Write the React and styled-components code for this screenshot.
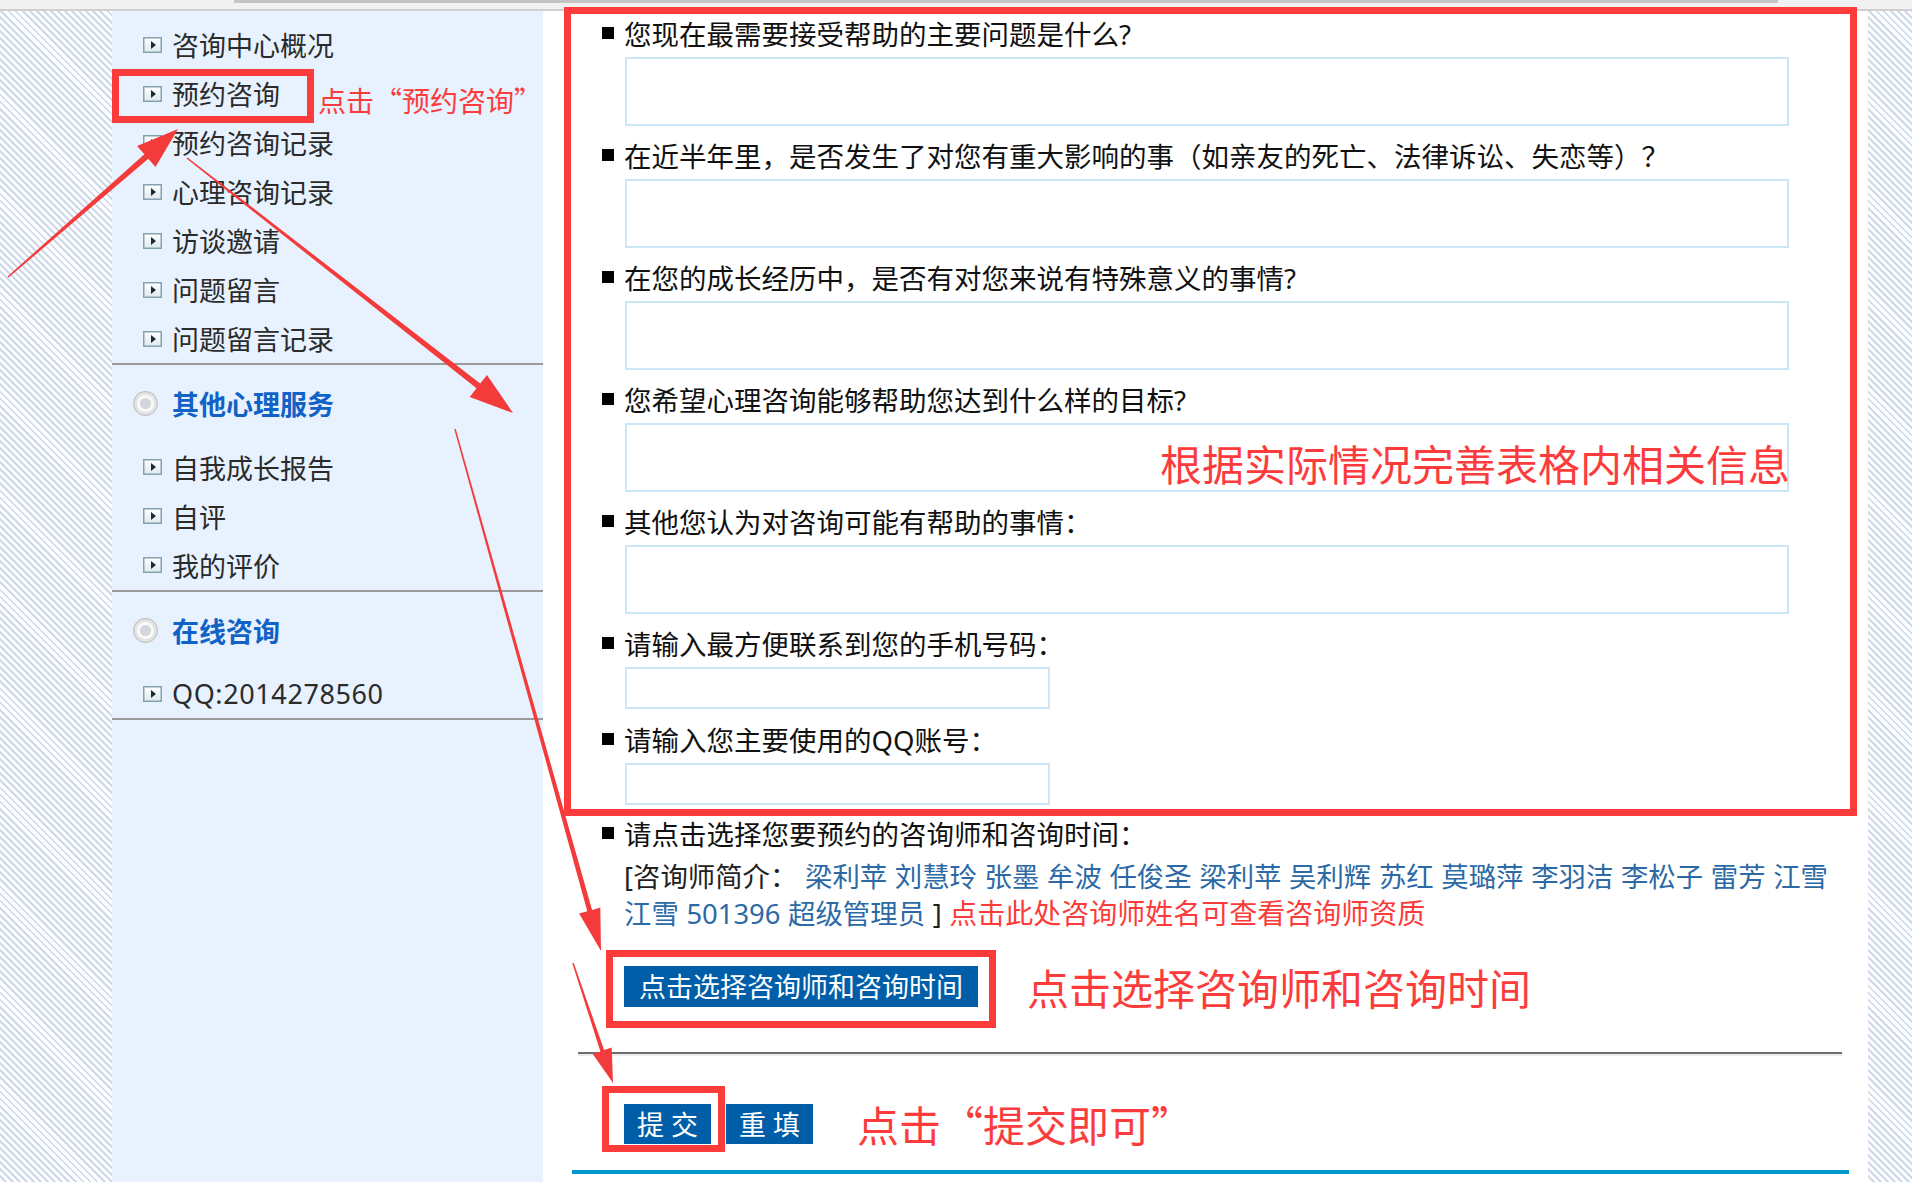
import React from "react"
import styled, { createGlobalStyle } from "styled-components"

const GlobalStyle = createGlobalStyle`
  html, body {
    margin: 0;
    padding: 0;
  }
  body {
    font-family: "Noto Sans", "Noto Sans CJK SC", sans-serif;
    background: #fff;
  }
`

const Page = styled.div`
  position: relative;
  width: 1912px;
  height: 1182px;
  overflow: hidden;
  display: flex;
  flex-direction: column;
`
const TopBar = styled.div`
  flex-shrink: 0;
  height: 9px;
  background: #f1f1f1;
  border-bottom: 2px solid #d0d0d0;
`
const ScrollThumb = styled.div`
  margin-left: 234px;
  width: 1544px;
  height: 3px;
  background: #c4c4c4;
`
const Body = styled.div`
  flex: 1;
  display: flex;
`
/* hatched page background left and right of the content */
const Stripes = styled.div`
  flex-shrink: 0;
  width: ${props => props.$w}px;
  background: repeating-linear-gradient(
    45deg,
    #fcfdff 0 3px,
    #cfd9e8 3px 5px
  );
`

const Sidebar = styled.aside`
  flex-shrink: 0;
  width: 431px;
  box-sizing: border-box;
  padding-top: 9px;
  background: #e7f2fe;
`
const MenuItem = styled.a`
  position: relative;
  display: flex;
  align-items: center;
  gap: 10px;
  height: 49px;
  padding-left: 31px;
  font-size: 27px;
  color: #2b2b2b;
  text-decoration: none;
  white-space: nowrap;
  letter-spacing: ${props => (props.$wide ? "0.6px" : "0")};
`
const SectionHead = styled.div`
  display: flex;
  align-items: center;
  gap: 14px;
  height: 49px;
  margin: 14px 0 14.5px;
  padding-left: 21px;
  font-size: 27px;
  font-weight: bold;
  color: #1162c6;
`
const Rule = styled.div`
  height: 2px;
  background: #9a9a9a;
`

const Main = styled.main`
  position: relative;
  flex-shrink: 0;
  width: 1325px;
  box-sizing: border-box;
  padding: 2px 19px 0 29px;
  background: #fff;
`
const Form = styled.form`
  margin: 0;
  padding-left: 30px;
`
const Question = styled.div`
  position: relative;
  margin-bottom: ${props => props.$after}px;
`
const Label = styled.div`
  display: flex;
  align-items: center;
  gap: 10px;
  height: 40px;
  font-size: 27.5px;
  color: #111;
  white-space: nowrap;

  &::before {
    content: "";
    flex-shrink: 0;
    width: 12px;
    height: 12px;
    background: #000;
  }
`
const Field = styled.input`
  display: block;
  margin: 4px 0 0 23px;
  width: ${props => props.$w}px;
  height: ${props => props.$h}px;
  box-sizing: border-box;
  border: 2px solid #cce6f6;
  background: #fff;
  outline: none;
`
const Counselors = styled.p`
  margin: 5px 0 0 22px;
  font-size: 27.4px;
  line-height: 37px;
  color: #222;
  white-space: nowrap;
  word-spacing: 0.5px;
`
const Name = styled.a`
  color: #2c69a5;
  text-decoration: none;
`
const Hint = styled.span`
  color: #fc3b3b;
  font-size: 28px;
`
const ActionRow = styled.div`
  display: flex;
  align-items: center;
  gap: ${props => props.$gap}px;
  height: 50px;
  margin: ${props => props.$top}px 0 0 ${props => props.$left}px;
`
const Buttons = styled.div`
  display: flex;
  gap: 15px;
`
const Spot = styled.span`
  position: relative;
  display: inline-flex;
`
const BlueButton = styled.button`
  height: ${props => props.$h}px;
  padding: 0 ${props => props.$pad}px;
  border: 0;
  background: #005ea8;
  color: #fff;
  font-family: inherit;
  font-size: 27px;
  line-height: 1;
  white-space: pre;
  cursor: pointer;
`
const Divider = styled.hr`
  margin: 40.5px 7px 0 6px;
  border: 0;
  height: 2px;
  background: #6e6e6e;
  border-bottom: 2px solid #ececec;
`
const BlueLine = styled.div`
  height: 4px;
  margin-top: 21px;
  background: #0097cd;
`

/* ---- tutorial annotations drawn over the page ---- */
const Highlight = styled.span`
  position: absolute;
  top: ${props => props.$t}px;
  left: ${props => props.$l}px;
  right: ${props => props.$r}px;
  bottom: ${props => props.$b}px;
  border: 7px solid #fc3b3b;
  pointer-events: none;
  z-index: 5;
`
const FormFrame = styled.div`
  position: absolute;
  left: 21px;
  top: -4px;
  width: 1293px;
  height: 809px;
  box-sizing: border-box;
  border: 7px solid #fc3b3b;
  pointer-events: none;
  z-index: 5;
`
const Callout = styled.span`
  font-family: "Noto Sans CJK SC", sans-serif;
  font-size: ${props => props.$size || 42}px;
  line-height: ${props => (props.$size ? 34 : 50)}px;
  color: #fc3c3c;
  white-space: nowrap;
`
const SideNote = styled(Callout)`
  position: absolute;
  left: 206px;
  top: 14px;
`
const FormNote = styled(Callout)`
  position: absolute;
  right: 59px;
  top: 59px;
`
const Overlay = styled.svg`
  position: absolute;
  left: 0;
  top: 0;
  pointer-events: none;
  z-index: 10;
`

function ItemIcon() {
  return (
    <svg width="19" height="16" viewBox="0 0 19 16">
      <defs>
        <linearGradient id="ib" x1="0" y1="0" x2="0" y2="1">
          <stop offset="0" stopColor="#ffffff" />
          <stop offset="1" stopColor="#dfe9ee" />
        </linearGradient>
      </defs>
      <rect x="0.75" y="0.75" width="17.5" height="14.5" fill="url(#ib)" stroke="#86a2ae" strokeWidth="1.5" />
      <polygon points="8,4 13,8 8,12" fill="#1d2a33" />
    </svg>
  )
}

function HeadIcon() {
  return (
    <svg width="25" height="25" viewBox="0 0 25 25">
      <circle cx="12.5" cy="12.5" r="11.8" fill="#e4e4e4" stroke="#c2c2c2" strokeWidth="1.2" />
      <circle cx="12.5" cy="12.5" r="8.5" fill="#fafafa" />
      <circle cx="12.5" cy="12.5" r="5.6" fill="#d3d6db" />
    </svg>
  )
}

// tapered arrow: thin tail, thicker neck, triangular head
function arrowPoints([x1, y1], [x2, y2], tail, neck, headLen, headW) {
  const dx = x2 - x1
  const dy = y2 - y1
  const len = Math.hypot(dx, dy)
  const ux = dx / len
  const uy = dy / len
  const nx = -uy
  const ny = ux
  const bx = x2 - ux * headLen
  const by = y2 - uy * headLen
  const pts = [
    [x1 + (nx * tail) / 2, y1 + (ny * tail) / 2],
    [bx + (nx * neck) / 2, by + (ny * neck) / 2],
    [bx + (nx * headW) / 2, by + (ny * headW) / 2],
    [x2, y2],
    [bx - (nx * headW) / 2, by - (ny * headW) / 2],
    [bx - (nx * neck) / 2, by - (ny * neck) / 2],
    [x1 - (nx * tail) / 2, y1 - (ny * tail) / 2],
  ]
  return pts.map(p => p.map(v => v.toFixed(1)).join(",")).join(" ")
}

const arrows = [
  { from: [8, 277], to: [178, 129], tail: 1.5, neck: 6, head: 42, width: 28 },
  { from: [187, 158], to: [513, 413], tail: 1.5, neck: 6, head: 44, width: 28 },
  { from: [455, 429], to: [601, 951], tail: 1.5, neck: 5, head: 42, width: 22 },
  { from: [573, 963], to: [613, 1083], tail: 1.5, neck: 4, head: 34, width: 20 },
]

const menuTop = ["咨询中心概况", "预约咨询", "预约咨询记录", "心理咨询记录", "访谈邀请", "问题留言", "问题留言记录"]
const menuServices = ["自我成长报告", "自评", "我的评价"]

const bigQuestions = [
  "您现在最需要接受帮助的主要问题是什么?",
  "在近半年里，是否发生了对您有重大影响的事（如亲友的死亡、法律诉讼、失恋等）？",
  "在您的成长经历中，是否有对您来说有特殊意义的事情?",
  "您希望心理咨询能够帮助您达到什么样的目标?",
  "其他您认为对咨询可能有帮助的事情：",
]

const namesLine1 = ["梁利苹", "刘慧玲", "张墨", "牟波", "任俊圣", "梁利苹", "吴利辉", "苏红", "莫璐萍", "李羽洁", "李松子", "雷芳", "江雪"]
const namesLine2 = ["江雪", "501396", "超级管理员"]

export default function App() {
  return (
    <Page>
      <GlobalStyle />
      <TopBar>
        <ScrollThumb />
      </TopBar>
      <Body>
        <Stripes $w={112} />
        <Sidebar>
          {menuTop.map(text => (
            <MenuItem href="#" key={text}>
              <ItemIcon />
              {text}
              {text === "预约咨询" && (
                <>
                  <Highlight $t={0} $l={0} $r={229} $b={-5} />
                  <SideNote $size={28}>点击“预约咨询”</SideNote>
                </>
              )}
            </MenuItem>
          ))}
          <Rule />
          <SectionHead>
            <HeadIcon />
            其他心理服务
          </SectionHead>
          {menuServices.map(text => (
            <MenuItem href="#" key={text}>
              <ItemIcon />
              {text}
            </MenuItem>
          ))}
          <Rule />
          <SectionHead>
            <HeadIcon />
            在线咨询
          </SectionHead>
          <MenuItem href="#" $wide>
            <ItemIcon />
            QQ:2014278560
          </MenuItem>
          <Rule />
        </Sidebar>

        <Main>
          <FormFrame />
          <Form>
            {bigQuestions.map((q, i) => (
              <Question $after={9} key={q}>
                <Label>{q}</Label>
                <Field $w={1164} $h={69} />
                {i === 3 && <FormNote>根据实际情况完善表格内相关信息</FormNote>}
              </Question>
            ))}
            <Question $after={10}>
              <Label>请输入最方便联系到您的手机号码：</Label>
              <Field $w={425} $h={42} />
            </Question>
            <Question $after={8}>
              <Label>请输入您主要使用的QQ账号：</Label>
              <Field $w={425} $h={42} />
            </Question>
            <Label>请点击选择您要预约的咨询师和咨询时间：</Label>
            <Counselors>
              [咨询师简介：&nbsp;
              {namesLine1.map((n, i) => (
                <React.Fragment key={i}>
                  <Name href="#">{n}</Name>{" "}
                </React.Fragment>
              ))}
              <br />
              {namesLine2.map((n, i) => (
                <React.Fragment key={i}>
                  <Name href="#">{n}</Name>{" "}
                </React.Fragment>
              ))}
              ] <Hint>点击此处咨询师姓名可查看咨询师资质</Hint>
            </Counselors>
            <ActionRow $top={29.5} $left={22} $gap={49}>
              <Spot>
                <BlueButton type="button" $h={41} $pad={15}>
                  点击选择咨询师和咨询时间
                </BlueButton>
                <Highlight $t={-16} $l={-18} $r={-18} $b={-21} />
              </Spot>
              <Callout>点击选择咨询师和咨询时间</Callout>
            </ActionRow>
          </Form>
          <Divider />
          <ActionRow $top={43} $left={52} $gap={44}>
            <Buttons>
              <Spot>
                <BlueButton type="submit" $h={40} $pad={13}>
                  提 交
                </BlueButton>
                <Highlight $t={-18} $l={-22} $r={-14} $b={-8} />
              </Spot>
              <BlueButton type="reset" $h={40} $pad={13}>
                重 填
              </BlueButton>
            </Buttons>
            <Callout>点击“提交即可”</Callout>
          </ActionRow>
          <BlueLine />
        </Main>
        <Stripes $w={44} />
      </Body>

      <Overlay width="1912" height="1182" viewBox="0 0 1912 1182">
        {arrows.map((a, i) => (
          <polygon
            key={i}
            points={arrowPoints(a.from, a.to, a.tail, a.neck, a.head, a.width)}
            fill="#f43b3b"
          />
        ))}
      </Overlay>
    </Page>
  )
}
